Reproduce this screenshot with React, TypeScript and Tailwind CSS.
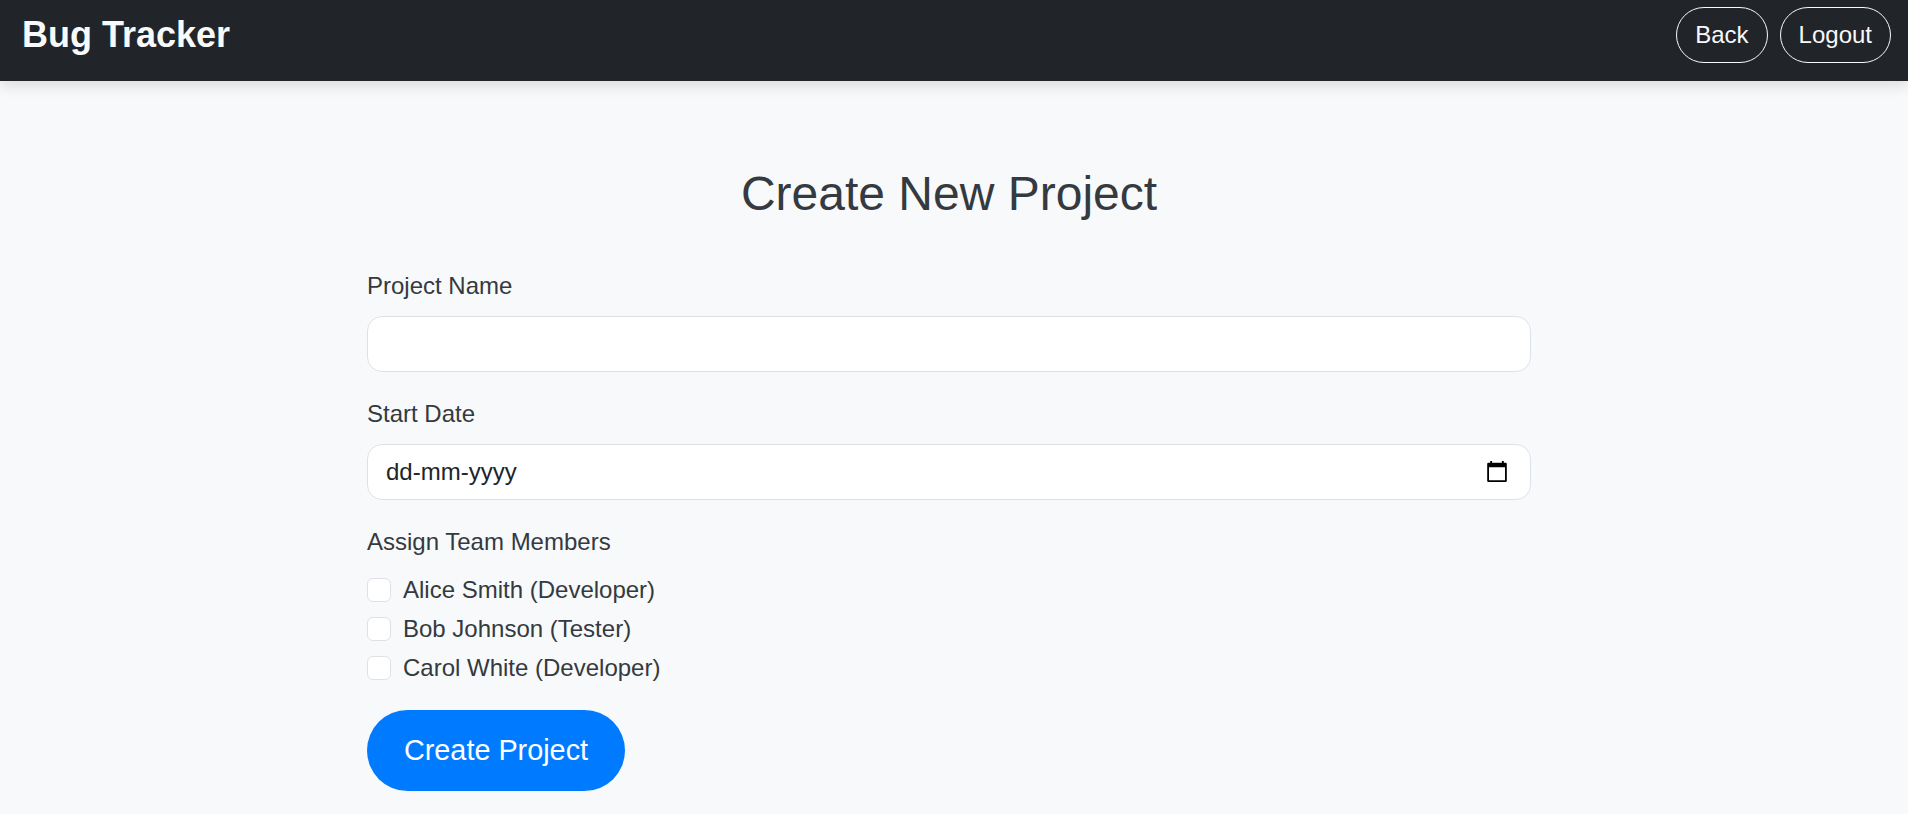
const members = ["Alice Smith (Developer)", "Bob Johnson (Tester)", "Carol White (Developer)"];

function NavButton({ label }: { label: string }) {
  return (
    <button
      type="button"
      className="h-14 rounded-[30px] border border-[#f8f9fa] px-[18px] pb-px text-2xl leading-9 text-[#f8f9fa]"
    >
      {label}
    </button>
  );
}

function CalendarIcon() {
  return (
    <svg className="mb-px" width="20" height="21" viewBox="0 0 20 21" aria-hidden="true">
      <path
        fill="#000"
        fillRule="evenodd"
        d="M3.200 0h1.900v1.700h9.800V0h1.900v1.700h1.700A1.300 1.300 0 0 1 19.800 3v16.700a1.300 1.300 0 0 1-1.300 1.300h-17A1.300 1.300 0 0 1 .2 19.700V3a1.300 1.300 0 0 1 1.300-1.300h1.700zM2 6.300V19.300h16V6.300z"
      />
    </svg>
  );
}

export default function App() {
  return (
    <div className="h-[814px] overflow-hidden bg-[#f8f9fb] font-['Liberation_Sans',Arial,sans-serif] text-2xl leading-9 text-[#343a40]">
      <header className="flex h-[81px] items-start justify-between bg-[#212529] pt-[7px] pr-[17px] pl-[22px] shadow-[0_6px_12px_rgba(0,0,0,0.1)]">
        <span className="text-4xl leading-[56px] font-bold text-[#f8f9fa]">Bug Tracker</span>
        <nav className="flex gap-3">
          <NavButton label="Back" />
          <NavButton label="Logout" />
        </nav>
      </header>

      <main className="ml-[367px] w-[1164px] pt-[84px]">
        <h2 className="mb-[45px] text-center text-5xl leading-[58px]">Create New Project</h2>
        <form onSubmit={(event) => event.preventDefault()}>
          <div className="mb-6">
            <label htmlFor="name" className="mb-3 block">
              Project Name
            </label>
            <input
              id="name"
              type="text"
              className="block h-14 w-full rounded-[15px] border border-[#dee2e6] bg-white px-[18px] outline-none"
            />
          </div>

          <div className="mb-6">
            <label htmlFor="start" className="mb-3 block">
              Start Date
            </label>
            <div className="flex h-14 items-center rounded-[15px] border border-[#dee2e6] bg-white pr-[23px] pl-[18px]">
              <input
                id="start"
                type="text"
                placeholder="dd-mm-yyyy"
                className="min-w-0 flex-1 bg-transparent text-[#212529] outline-none placeholder:text-[#212529] placeholder:opacity-100"
              />
              <CalendarIcon />
            </div>
          </div>

          <div className="mb-6">
            <div className="mb-3">Assign Team Members</div>
            {members.map((member) => (
              <label key={member} className="mb-[3px] flex items-center gap-3">
                <input
                  type="checkbox"
                  className="size-6 appearance-none rounded-[6px] border border-[#dee2e6] bg-white"
                />
                {member}
              </label>
            ))}
          </div>

          <button
            type="submit"
            className="h-[81px] w-[258px] rounded-[45px] bg-[#007bff] text-[28.8px] leading-[43px] text-white"
          >
            Create Project
          </button>
        </form>
      </main>
    </div>
  );
}
